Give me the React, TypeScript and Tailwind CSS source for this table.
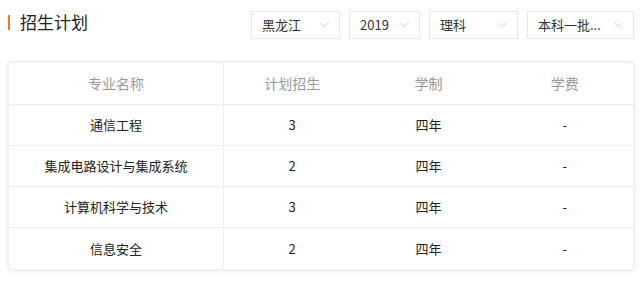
import React from "react";

const rows = [
  ["通信工程", "3", "四年", "-"],
  ["集成电路设计与集成系统", "2", "四年", "-"],
  ["计算机科学与技术", "3", "四年", "-"],
  ["信息安全", "2", "四年", "-"],
];

const selects = [
  { label: "黑龙江", w: "w-[89px]" },
  { label: "2019", w: "w-[71px]" },
  { label: "理科", w: "w-[89px]" },
  { label: "本科一批...", w: "w-[107px]" },
];

function Chevron() {
  return (
    <svg width="9" height="6" viewBox="0 0 9 6" className="shrink-0">
      <path d="M0.5 0.8 L4.5 5 L8.5 0.8" fill="none" stroke="#d0d0d0" strokeWidth="1" />
    </svg>
  );
}

export default function App() {
  return (
    <div
      className="w-[644px] h-[281px] bg-white pl-2 pr-[10px] pt-[11px]"
      style={{ fontFamily: '"Noto Sans CJK SC", "Noto Sans", sans-serif' }}
    >
      <div className="flex items-start justify-between h-[28px]">
        <div className="flex items-start h-[22px]">
          <div className="w-[2px] h-[15px] bg-[#f07a1d] mt-[4px]" />
          <div className="ml-[10px] text-[17px] text-[#222] leading-[22px]">招生计划</div>
        </div>
        <div className="flex gap-[9px]">
          {selects.map((s) => (
            <div
              key={s.label}
              className={`${s.w} h-[28px] border border-[#e8e8e8] flex items-center justify-between pl-[10px] pr-[10px] text-[13px] text-[#333]`}
            >
              <span>{s.label}</span>
              <Chevron />
            </div>
          ))}
        </div>
      </div>
      <div className="mt-[23px] rounded-[3px] bg-white shadow-[0_0_5px_rgba(0,0,0,0.12)] border border-[#f0f0f0]">
        <div className="grid grid-cols-[215px_1fr_1fr_1fr] h-[42px] border-b border-[#eee] text-[14px] text-[#999]">
          {["专业名称", "计划招生", "学制", "学费"].map((h, i) => (
            <div
              key={h}
              className={`flex items-center justify-center ${i === 0 ? "border-r border-[#eee]" : ""}`}
            >
              {h}
            </div>
          ))}
        </div>
        {rows.map((r, ri) => (
          <div
            key={ri}
            className={`grid grid-cols-[215px_1fr_1fr_1fr] h-[41px] text-[13px] text-[#222] ${
              ri < rows.length - 1 ? "border-b border-[#eee]" : ""
            }`}
          >
            {r.map((c, i) => (
              <div
                key={i}
                className={`flex items-center justify-center ${i === 0 ? "border-r border-[#eee]" : ""}`}
              >
                {c}
              </div>
            ))}
          </div>
        ))}
      </div>
    </div>
  );
}
